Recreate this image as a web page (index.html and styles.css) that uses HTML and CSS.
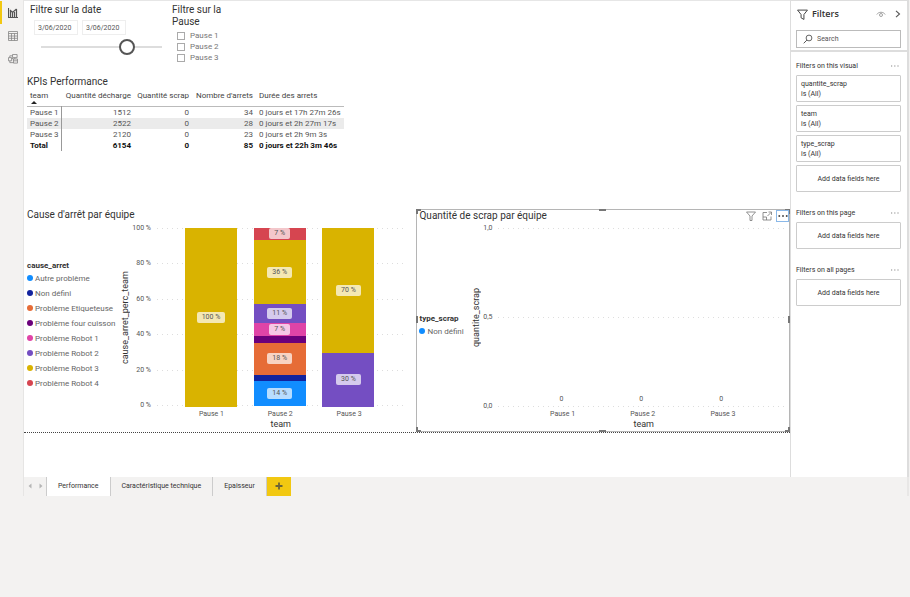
FILE: index.html
```html
<!DOCTYPE html>
<html lang="fr">
<head>
<meta charset="utf-8">
<title>Performance</title>
<link rel="stylesheet" href="styles.css">
</head>
<body>
<div class="app">
  <nav class="rail" aria-label="Vues">
    <button class="rail-btn active" aria-label="Rapport"><svg viewBox="0 0 10 10"><path d="M.5 0v9.5H10M2.5 9V3M4.5 9V5M6.5 9V4M8.5 9V1M2 2l2.500 2.500L8.500 1" fill="none" stroke="#555" stroke-width="1.200"/></svg></button>
    <button class="rail-btn" aria-label="Données"><svg viewBox="0 0 10 10"><path d="M.5.500h9v9h-9zM.5 2.500h9M.5 5h9M.5 7.300h9M3.500 2.500v7M6.500 2.500v7" fill="none" stroke="#858585" stroke-width=".8"/></svg></button>
    <button class="rail-btn" aria-label="Modèle"><svg viewBox="0 0 11 11"><path d="M5 .5h5v3.500H5zM.5 4h3.500v3.500H.5zM6 5.500h4.500V10H6zM4 5h2M2 4V2h3M2 7.500V9.500h4M7.500 4v1.500M6 7.500h4.500" fill="none" stroke="#858585" stroke-width=".9"/></svg></button>
  </nav>
  <main class="canvas">
    <div class="page">
      <div class="slicers">
        <section class="slicer-date">
          <h2>Filtre sur la date</h2>
          <div class="dates">
            <input type="text" value="3/06/2020" aria-label="Date de début">
            <input type="text" value="3/06/2020" aria-label="Date de fin">
          </div>
          <input class="slider" type="range" min="0" max="100" value="74" aria-label="Période">
        </section>
        <section class="slicer-pause">
          <h2>Filtre sur la Pause</h2>
          <label><input type="checkbox">Pause 1</label>
          <label><input type="checkbox">Pause 2</label>
          <label><input type="checkbox">Pause 3</label>
        </section>
      </div>
      <section class="kpis">
        <h2>KPIs Performance</h2>
        <table>
          <thead><tr><th class="team sorted">team</th><th class="qty">Quantité décharge</th><th class="scrap">Quantité scrap</th><th class="stops">Nombre d'arrets</th><th class="time">Durée des arrets</th></tr></thead>
          <tbody>
            <tr><td class="team">Pause 1</td><td>1512</td><td>0</td><td>34</td><td class="time">0 jours et 17h 27m 26s</td></tr>
            <tr><td class="team">Pause 2</td><td>2522</td><td>0</td><td>28</td><td class="time">0 jours et 2h 27m 17s</td></tr>
            <tr><td class="team">Pause 3</td><td>2120</td><td>0</td><td>23</td><td class="time">0 jours et 2h 9m 3s</td></tr>
          </tbody>
          <tfoot><tr><td class="team">Total</td><td>6154</td><td>0</td><td>85</td><td class="time">0 jours et 22h 3m 46s</td></tr></tfoot>
        </table>
      </section>
      <div class="charts">
        <section class="chart chart-cause">
          <h2>Cause d'arrêt par équipe</h2>
          <div class="chart-body">
            <div class="legend">
              <h3>cause_arret</h3>
              <ul>
                <li><i class="c-blue"></i>Autre problème</li>
                <li><i class="c-navy"></i>Non défini</li>
                <li><i class="c-orange"></i>Problème Etiqueteuse</li>
                <li><i class="c-plum"></i>Problème four cuisson</li>
                <li><i class="c-pink"></i>Problème Robot 1</li>
                <li><i class="c-purple"></i>Problème Robot 2</li>
                <li><i class="c-gold"></i>Problème Robot 3</li>
                <li><i class="c-red"></i>Problème Robot 4</li>
              </ul>
            </div>
            <div class="y-title">cause_arret_perc_team</div>
            <ul class="ticks"><li>100 %</li><li>80 %</li><li>60 %</li><li>40 %</li><li>20 %</li><li>0 %</li></ul>
            <div class="plot">
              <div class="grid-lines"><hr><hr><hr><hr><hr><hr></div>
              <div class="bars">
                <div class="bar"><div class="seg c-gold" style="flex-grow:100"><span>100 %</span></div></div>
                <div class="bar">
                  <div class="seg c-red" style="flex-grow:2"><span>7 %</span></div>
                  <div class="seg c-gold" style="flex-grow:10"><span>36 %</span></div>
                  <div class="seg c-purple" style="flex-grow:3"><span>11 %</span></div>
                  <div class="seg c-pink" style="flex-grow:2"><span>7 %</span></div>
                  <div class="seg c-plum" style="flex-grow:1"></div>
                  <div class="seg c-orange" style="flex-grow:5"><span>18 %</span></div>
                  <div class="seg c-navy" style="flex-grow:1"></div>
                  <div class="seg c-blue" style="flex-grow:4"><span>14 %</span></div>
                </div>
                <div class="bar">
                  <div class="seg c-gold" style="flex-grow:70"><span>70 %</span></div>
                  <div class="seg c-purple" style="flex-grow:30"><span>30 %</span></div>
                </div>
              </div>
            </div>
            <div class="x-axis">
              <ul><li>Pause 1</li><li>Pause 2</li><li>Pause 3</li></ul>
              <div class="x-title">team</div>
            </div>
          </div>
        </section>
        <section class="chart chart-scrap">
          <b class="handle tl"></b><b class="handle tc"></b><b class="handle tr"></b><b class="handle ml"></b><b class="handle mr"></b><b class="handle bl"></b><b class="handle bc"></b><b class="handle br"></b>
          <div class="visual-tools">
            <button aria-label="Filtres"><svg viewBox="0 0 10 10"><path d="M.5 1h9L6 5v4.500H4V5z" fill="none" stroke="#777" stroke-width=".8"/></svg></button>
            <button aria-label="Mode focus"><svg viewBox="0 0 10 10"><path d="M5 1.500H1v7.500h8V5.500M1 6h3.500v3M5.500 5l3.500-3.500M6.500 1H9.500V4" fill="none" stroke="#777" stroke-width=".8"/></svg></button>
            <button class="more" aria-label="Plus d'options"><svg viewBox="0 0 10 10"><path d="M.5 4.300h1.600v1.500H.5zM4.200 4.300h1.600v1.500H4.200zM7.900 4.300h1.600v1.500H7.900z" fill="#222"/></svg></button>
          </div>
          <h2>Quantité de scrap par équipe</h2>
          <div class="chart-body">
            <div class="legend">
              <h3>type_scrap</h3>
              <ul><li><i class="c-blue"></i>Non défini</li></ul>
            </div>
            <div class="y-title">quantite_scrap</div>
            <ul class="ticks"><li>1,0</li><li>0,5</li><li>0,0</li></ul>
            <div class="plot">
              <div class="grid-lines"><hr><hr><hr></div>
              <div class="bars zero"><span>0</span><span>0</span><span>0</span></div>
            </div>
            <div class="x-axis">
              <ul><li>Pause 1</li><li>Pause 2</li><li>Pause 3</li></ul>
              <div class="x-title">team</div>
            </div>
          </div>
        </section>
      </div>
    </div>
  </main>
  <aside class="filters">
    <header>
      <div class="filters-head">
        <svg class="funnel" viewBox="0 0 10 10"><path d="M.5 1h9L6.300 5v4.500L3.700 8V5z" fill="none" stroke="#444" stroke-width=".9"/></svg>
        <h2>Filters</h2>
        <button aria-label="Afficher"><svg class="eye" viewBox="0 0 10 8"><path d="M.8 4.500C2.500 1.500 7.500 1.500 9.200 4.500M3.500 5a1.500 1.500 0 1 1 3 0a1.500 1.500 0 1 1-3 0" fill="none" stroke="#999" stroke-width=".9"/></svg></button>
        <button aria-label="Réduire"><svg class="chev" viewBox="0 0 6 8"><path d="M1 .8L4.500 4L1 7.200" fill="none" stroke="#555" stroke-width="1.100"/></svg></button>
      </div>
      <label class="search"><svg viewBox="0 0 10 10"><circle cx="6" cy="4" r="2.900" fill="none" stroke="#555" stroke-width=".9"/><path d="M3.900 6.100L.7 9.300" stroke="#555"/></svg><input type="text" placeholder="Search" aria-label="Search"></label>
    </header>
    <section>
      <h3>Filters on this visual <button aria-label="Options"><svg viewBox="0 0 8 2"><path d="M0 .5h1.200v1H0zM3.200.5h1.200v1H3.200zM6.400.5h1.200v1H6.400z" fill="#888"/></svg></button></h3>
      <div class="card"><span>quantite_scrap</span><span>is (All)</span></div>
      <div class="card"><span>team</span><span>is (All)</span></div>
      <div class="card"><span>type_scrap</span><span>is (All)</span></div>
      <div class="card drop">Add data fields here</div>
    </section>
    <section>
      <h3>Filters on this page <button aria-label="Options"><svg viewBox="0 0 8 2"><path d="M0 .5h1.200v1H0zM3.200.5h1.200v1H3.200zM6.400.5h1.200v1H6.400z" fill="#888"/></svg></button></h3>
      <div class="card drop">Add data fields here</div>
    </section>
    <section>
      <h3>Filters on all pages <button aria-label="Options"><svg viewBox="0 0 8 2"><path d="M0 .5h1.200v1H0zM3.200.5h1.200v1H3.200zM6.400.5h1.200v1H6.400z" fill="#888"/></svg></button></h3>
      <div class="card drop">Add data fields here</div>
    </section>
  </aside>
  <nav class="tabs" aria-label="Pages">
    <button class="arrow" aria-label="Précédent"><svg viewBox="0 0 4 6"><path d="M3.500.5v5L.5 3z" fill="#b5b5b5"/></svg></button>
    <button class="arrow" aria-label="Suivant"><svg viewBox="0 0 4 6"><path d="M.5.500v5L3.500 3z" fill="#b5b5b5"/></svg></button>
    <button class="tab current">Performance</button>
    <button class="tab">Caractéristique technique</button>
    <button class="tab">Epaisseur</button>
    <button class="add" aria-label="Nouvelle page"><svg viewBox="0 0 8 8"><path d="M4 .5v7M.5 4h7" stroke="#6b6438" stroke-width="1.800"/></svg></button>
  </nav>
</div>
</body>
</html>
```
FILE: styles.css
```css
* { box-sizing: border-box; }
body {
  margin: 0;
  background: #f3f2f1;
  color: #555;
  font: 8px/11px Roboto, "Open Sans", sans-serif;
}
h2, h3, ul { margin: 0; padding: 0; list-style: none; }
button { display: flex; align-items: center; justify-content: center; padding: 0; border: 0; background: none; color: inherit; font: inherit; }
input { font: inherit; color: inherit; }
svg { display: block; }
h2 { color: #333; font: 10px/12px Roboto, sans-serif; }

.app { display: grid; grid-template-columns: 24px minmax(0, 1fr) 119px; grid-template-rows: auto 19px; padding-right: 1px; }

.rail { grid-row: 1 / 3; border-right: 1px solid #e6e5e4; padding-top: 1px; }
.rail-btn { width: 100%; height: 23px; border-left: 2px solid transparent; }
.rail-btn.active { border-color: #f2c811; }
.rail-btn svg { width: 10px; height: 10px; }

.canvas { background: #fff; border-top: 1px solid #e6e6e6; padding-bottom: 44px; }
.page { border-bottom: 1px dotted #444; }

.slicers { display: flex; padding: 3px 3px 0; height: 75px; }
.slicer-date { width: 145px; padding-left: 3px; }
.dates { display: flex; gap: 4px; margin: 4px 0 4px 4px; }
.dates input { width: 44px; height: 15px; padding: 0 3px; border: 1px solid #eee; font-size: 7px; }
.slider { appearance: none; display: block; width: 121px; height: 16px; margin: 0 0 0 11px; background: linear-gradient(#ddd, #ddd) center / 100% 2px no-repeat; }
.slider::-webkit-slider-thumb { appearance: none; width: 16px; height: 16px; border: 2px solid #555; border-radius: 50%; background: #fff; }
.slicer-pause { width: 70px; }
.slicer-pause h2 { margin-bottom: 2px; }
.slicer-pause label { display: flex; align-items: center; height: 11px; margin-left: 5px; color: #777; }
.slicer-pause input { appearance: none; width: 8px; height: 8px; margin: 0 5px 0 0; border: 1px solid #aaa; }

.kpis { padding-left: 3px; }
table { border-collapse: collapse; table-layout: fixed; width: 317px; }
th, td { padding: 0; text-align: right; white-space: nowrap; }
th { height: 18px; vertical-align: top; padding-top: 2px; font-weight: 400; color: #444; }
thead tr { border-bottom: 1px solid #bbb; }
.team { width: 34px; text-align: left; padding-left: 3px; }
td.team { border-right: 1px solid #999; }
.sorted::after { content: ""; display: block; width: 0; border: 3px solid transparent; border-top: 0; border-bottom-color: #222; margin-left: 1px; }
.qty { width: 70px; }
.scrap { width: 58px; }
.stops { width: 64px; }
.time { text-align: left; padding-left: 6px; }
tbody tr:nth-child(2) { background: #ebebeb; }
tfoot { color: #111; font-weight: 700; }

.charts { display: grid; grid-template-columns: minmax(0, 393fr) minmax(0, 374fr); margin-top: 58px; }
.chart { position: relative; height: 223px; }
.chart-cause { padding-left: 3px; }
.chart-scrap { border: 1px solid #b5b5b5; padding-left: 2px; }
.chart h2 { height: 19px; }
.chart-scrap h2 { height: 18px; }
.chart-body { display: grid; grid-template-columns: 92px 12px 20px minmax(0, 1fr); grid-template-rows: 179px auto; }
.chart-scrap .chart-body { grid-template-columns: 51px 12px 10px minmax(0, 1fr); }
.legend { white-space: nowrap; padding-top: 32px; }
.chart-scrap .legend { padding-top: 85px; }
.legend h3 { color: #333; font: 700 8px/11px Roboto, sans-serif; }
.legend li { display: flex; align-items: center; gap: 2px; height: 15px; color: #666; }
.legend i { width: 6px; height: 6px; border-radius: 50%; }
.y-title { display: flex; align-items: center; justify-content: center; writing-mode: vertical-rl; transform: rotate(180deg); color: #333; font-size: 9px; white-space: nowrap; }
.ticks { display: flex; flex-direction: column; justify-content: space-between; font-size: 7px; white-space: nowrap; }
.ticks li { display: flex; align-items: center; justify-content: flex-end; height: 1px; }
.plot { display: grid; margin-left: 6px; }
.grid-lines, .bars { grid-area: 1 / 1; }
.grid-lines { display: flex; flex-direction: column; justify-content: space-between; margin-right: 12px; }
.chart-scrap .grid-lines { margin-right: 2px; }
hr { width: 100%; height: 1px; margin: 0; border: 0; background: repeating-linear-gradient(90deg, #ddd 0 1px, transparent 1px 5px); }
.bars { display: flex; justify-content: space-between; margin: 0 42px 0 28px; }
.bar { display: flex; flex-direction: column; width: 52px; }
.seg { display: flex; align-items: center; justify-content: center; flex-basis: 0; min-height: 0; }
.seg span { padding: 0 5px; border-radius: 2px; background: rgba(255, 255, 255, .7); font-size: 7px; color: #555; }
.zero { align-items: flex-end; margin: 0 28px 0 23px; font-size: 7px; }
.zero span { flex: 1; text-align: center; padding-bottom: 2px; }
.x-axis { grid-column: 4; margin-left: 6px; text-align: center; font-size: 7px; line-height: 10px; }
.x-axis ul { display: flex; margin: 2px 33px 0 20px; }
.x-axis li { flex: 1; }
.chart-scrap .x-axis ul { margin: 2px 26px 0 24px; }
.x-title { margin-right: 12px; color: #333; font-size: 9px; }
.chart-scrap .x-title { margin-right: 0; }

.c-blue { background: #118dff; }
.c-navy { background: #12239e; }
.c-orange { background: #e66c37; }
.c-plum { background: #6b007b; }
.c-pink { background: #e044a7; }
.c-purple { background: #744ec2; }
.c-gold { background: #d9b300; }
.c-red { background: #d64550; }

.handle { position: absolute; border: 0 solid #777; }
.tl, .tr, .bl, .br { width: 5px; height: 5px; }
.tl, .tr { top: -1px; border-top-width: 2px; }
.bl, .br { bottom: -1px; border-bottom-width: 2px; }
.tl, .bl { left: -1px; border-left-width: 2px; }
.tr, .br { right: -1px; border-right-width: 2px; }
.tc, .bc { left: 50%; width: 7px; margin-left: -4px; border-top-width: 2px; }
.tc { top: -1px; }
.bc { bottom: -1px; }
.ml, .mr { top: 50%; height: 7px; margin-top: -4px; border-left-width: 2px; }
.ml { left: -1px; }
.mr { right: -1px; }
.visual-tools { position: absolute; top: 0; right: 0; display: flex; gap: 3px; }
.visual-tools button { width: 13px; height: 12px; }
.visual-tools svg { width: 10px; height: 10px; }
.visual-tools .more { border: 1px solid #8ab8e8; }

.filters { background: #fff; border: solid #ddd; border-width: 1px 2px 0 1px; color: #333; font-size: 7px; line-height: 10px; }
.filters header { padding: 6px 6px 2px 5px; border-bottom: 2px solid #ddd; }
.filters-head { display: flex; align-items: center; height: 14px; padding-left: 1px; margin-bottom: 9px; }
.filters h2 { flex: 1; margin-left: 4px; font: 600 9px/12px "Open Sans", sans-serif; }
.funnel { width: 11px; height: 11px; }
.eye { width: 10px; height: 8px; margin-right: 9px; }
.chev { width: 6px; height: 8px; }
.search { display: flex; align-items: center; height: 18px; padding-left: 6px; border: 1px solid #bbb; }
.search svg { width: 10px; height: 10px; }
.search input { flex: 1; min-width: 0; border: 0; padding: 0 4px; background: none; }
.search input::placeholder { color: #555; }
.filters section { display: flex; flex-direction: column; gap: 3px; padding: 9px 6px 0 5px; margin-bottom: 7px; }
.filters h3 { display: flex; justify-content: space-between; font: inherit; height: 10px; margin-bottom: 1px; padding-right: 2px; }
.filters h3 svg { width: 8px; height: 2px; }
.card { display: flex; flex-direction: column; justify-content: center; height: 27px; padding-left: 4px; border: 1px solid #ccc; border-radius: 1px; }
.drop { align-items: center; padding: 0; }

.tabs { grid-column: 2 / 4; display: flex; border-right: 2px solid #e8e7e6; color: #333; font-size: 7px; }
.arrow { width: 11px; }
.arrow svg { width: 4px; height: 6px; }
.tab { padding: 0 11px; border-right: 1px solid #ccc; }
.current { background: #fff; border-left: 1px solid #ccc; }
.add { width: 24px; background: #f2c811; }
.add svg { width: 8px; height: 8px; }
```
